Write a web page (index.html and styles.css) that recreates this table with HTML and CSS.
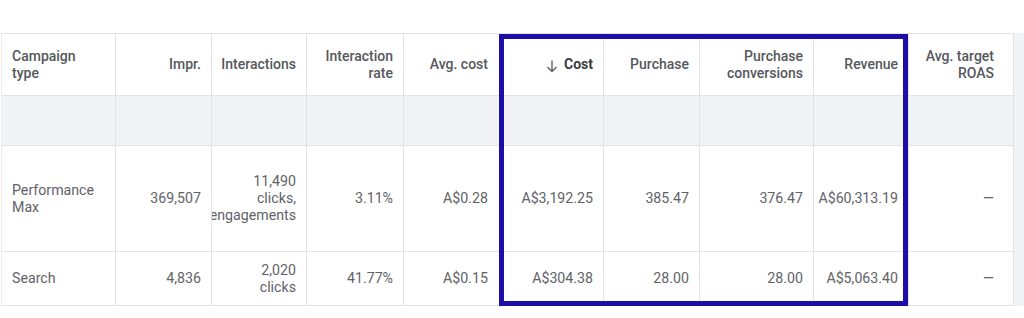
FILE: index.html
```html
<!DOCTYPE html>
<html>
<head>
<meta charset="utf-8">
<link rel="stylesheet" href="styles.css">
</head>
<body>
<div class="page">
  <div class="frame">
    <table class="grid">
      <colgroup>
        <col class="c1"><col class="c2"><col class="c3"><col class="c4"><col class="c5">
        <col class="c6"><col class="c7"><col class="c8"><col class="c9"><col class="c10">
      </colgroup>
      <thead>
        <tr class="head">
          <th class="left"><div class="cell">Campaign<br>type</div></th>
          <th><div class="cell">Impr.</div></th>
          <th><div class="cell">Interactions</div></th>
          <th><div class="cell">Interaction<br>rate</div></th>
          <th class="avg"><div class="cell">Avg. cost</div></th>
          <th class="sorted"><div class="cell"><svg class="arrow" width="12" height="14" viewBox="0 0 12 14"><path d="M6 1.5V12.5M1.5 8L6 12.5L10.5 8" fill="none" stroke="#5f6368" stroke-width="1.4"/></svg>Cost</div></th>
          <th><div class="cell">Purchase</div></th>
          <th><div class="cell">Purchase<br>conversions</div></th>
          <th><div class="cell">Revenue</div></th>
          <th class="last"><div class="cell">Avg. target<br>ROAS</div></th>
        </tr>
      </thead>
      <tbody>
        <tr class="total">
          <td></td><td></td><td></td><td></td><td></td><td></td><td></td><td></td><td></td><td></td>
        </tr>
        <tr class="tall">
          <td class="left"><div class="cell">Performance<br>Max</div></td>
          <td><div class="cell">369,507</div></td>
          <td><div class="cell"><div class="wrap">11,490<br>clicks,<br>engagements</div></div></td>
          <td><div class="cell">3.11%</div></td>
          <td class="avg"><div class="cell">A$0.28</div></td>
          <td><div class="cell">A$3,192.25</div></td>
          <td><div class="cell">385.47</div></td>
          <td><div class="cell">376.47</div></td>
          <td><div class="cell">A$60,313.19</div></td>
          <td class="last"><div class="cell">—</div></td>
        </tr>
        <tr class="short">
          <td class="left"><div class="cell">Search</div></td>
          <td><div class="cell">4,836</div></td>
          <td><div class="cell"><div class="wrap">2,020<br>clicks</div></div></td>
          <td><div class="cell">41.77%</div></td>
          <td class="avg"><div class="cell">A$0.15</div></td>
          <td><div class="cell">A$304.38</div></td>
          <td><div class="cell">28.00</div></td>
          <td><div class="cell">28.00</div></td>
          <td><div class="cell">A$5,063.40</div></td>
          <td class="last"><div class="cell">—</div></td>
        </tr>
      </tbody>
    </table>
    <div class="strip"></div>
    <div class="highlight"></div>
  </div>
</div>
</body>
</html>
```

FILE: styles.css
```css
* { box-sizing: border-box; }
html, body { margin: 0; padding: 0; background: #ffffff; }
body {
  font-family: Roboto, "Liberation Sans", Arial, sans-serif;
  width: 1024px;
  height: 318px;
  overflow: hidden;
}
.page { padding-top: 33px; }
.frame {
  position: relative;
  display: flex;
  width: 1024px;
}
.grid {
  border-collapse: collapse;
  table-layout: fixed;
  width: 1013px;
  margin-left: 1px;
}
.c1 { width: 114px; }
.c2 { width: 96px; }
.c3 { width: 95px; }
.c4 { width: 97px; }
.c5 { width: 97px; }
.c6 { width: 103px; }
.c7 { width: 96px; }
.c8 { width: 114px; }
.c9 { width: 95px; }
.c10 { width: 105px; }
th, td {
  border: 1px solid #e3e3e3;
  padding: 0;
  vertical-align: middle;
}
th {
  font-weight: 500;
  font-size: 14px;
  line-height: 17px;
  color: #55585c;
  text-align: right;
}
td {
  font-size: 14.2px;
  line-height: 17px;
  color: #5f6368;
  text-align: right;
}
.cell {
  display: flex;
  justify-content: flex-end;
  align-items: center;
  overflow: hidden;
  padding: 0 10px 0 10px;
  text-align: right;
}
.left .cell { justify-content: flex-start; text-align: left; }
.avg .cell { padding-right: 12px; }
.last .cell { padding-right: 19px; }
.wrap { flex: none; white-space: nowrap; }
.head th { height: 62px; }
.sorted { color: #3a3c40; font-weight: 700; }
.arrow { margin-right: 6px; margin-top: 2px; }
.total td { height: 50px; background: #f1f3f4; }
.tall td { height: 106px; }
.short td { height: 54px; }
tr > :first-child { border-left: 1px solid #ececec; }
.strip {
  width: 10px;
  background: #f2f3f5;
}
.highlight {
  position: absolute;
  left: 499px;
  top: 1px;
  width: 409px;
  height: 272px;
  border: 5px solid #1c0ea6;
  pointer-events: none;
}
```
